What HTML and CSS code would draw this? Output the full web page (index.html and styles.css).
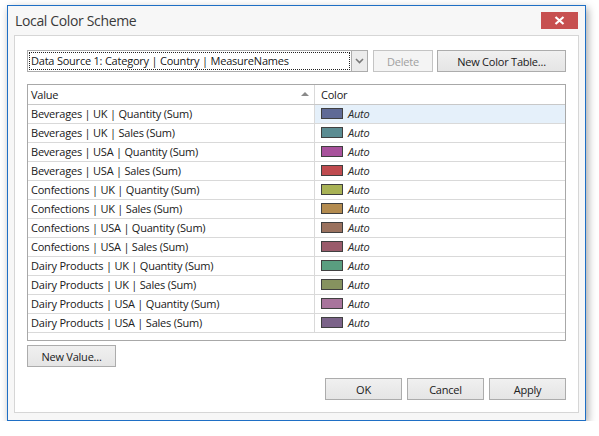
FILE: index.html
```html
<!DOCTYPE html>
<html lang="en">
<head>
    <meta charset="UTF-8">
    <title>Local Color Scheme</title>
    <link rel="stylesheet" href="styles.css">
</head>
<body>
    <div class="window">
        <div class="titlebar">
            <span class="title">Local Color Scheme</span>
            <div class="close-btn">
                <svg width="11" height="9" viewBox="0 0 11 9"><path d="M1.5 1 L9.5 8 M9.5 1 L1.5 8" stroke="#fff" stroke-width="2.2"/></svg>
            </div>
        </div>
        <div class="panel">
            <div class="toolbar">
                <div class="combo">
                    <div class="combo-text">Data Source 1: Category | Country | MeasureNames</div>
                    <div class="combo-arrow">
                        <svg width="9" height="6" viewBox="0 0 9 6"><path d="M1 1 L4.5 4.5 L8 1" stroke="#7a7a7a" stroke-width="1.6" fill="none"/></svg>
                    </div>
                </div>
                <button class="btn btn-delete" disabled>Delete</button>
                <button class="btn btn-newtable">New Color Table...</button>
            </div>
            <div class="grid">
                <div class="grid-row grid-header">
                    <div class="cell cell-value">Value <span class="sort-arrow"></span></div>
                    <div class="cell cell-color">Color</div>
                </div>
                <div id="rows"></div>
            </div>
            <div class="row-under">
                <button class="btn btn-newvalue">New Value...</button>
            </div>
            <div class="footer">
                <button class="btn btn-footer">OK</button>
                <button class="btn btn-footer">Cancel</button>
                <button class="btn btn-footer">Apply</button>
            </div>
        </div>
    </div>
    <script>
        let items = [
            ["Beverages | UK | Quantity (Sum)", "#5f6a96"],
            ["Beverages | UK | Sales (Sum)", "#5b8c92"],
            ["Beverages | USA | Quantity (Sum)", "#a8529c"],
            ["Beverages | USA | Sales (Sum)", "#bf4b4f"],
            ["Confections | UK | Quantity (Sum)", "#a8b255"],
            ["Confections | UK | Sales (Sum)", "#b38b4f"],
            ["Confections | USA | Quantity (Sum)", "#9a715e"],
            ["Confections | USA | Sales (Sum)", "#9a5b6b"],
            ["Dairy Products | UK | Quantity (Sum)", "#5a9e80"],
            ["Dairy Products | UK | Sales (Sum)", "#86925f"],
            ["Dairy Products | USA | Quantity (Sum)", "#a8749c"],
            ["Dairy Products | USA | Sales (Sum)", "#7b6389"]
        ];
        let rows = document.getElementById("rows");
        items.forEach((item, i) => {
            let row = document.createElement("div");
            row.className = "grid-row";
            row.innerHTML = `<div class="cell cell-value">${item[0]}</div>` +
                `<div class="cell cell-color${i === 0 ? " focused" : ""}"><span class="swatch" style="background:${item[1]}"></span><i>Auto</i></div>`;
            rows.appendChild(row);
        });
    </script>
</body>
</html>
```

FILE: styles.css
```css
body {
    margin: 0;
    background: #ffffff;
    font-family: "Open Sans", "Noto Sans", sans-serif;
    font-size: 11px;
    letter-spacing: -0.22px;
    color: #202020;
}
.window {
    margin: 5px 0 0 7px;
    width: 577px;
    height: 414px;
    border: 1px solid #1f6fc5;
    background: #f7f7f7;
    box-shadow: 2px 3px 8px rgba(0, 0, 0, 0.35);
    display: flex;
    flex-direction: column;
}
.titlebar {
    height: 29px;
    display: flex;
    justify-content: space-between;
    align-items: flex-start;
}
.title {
    font-size: 14px;
    color: #3a3a3a;
    margin: 5px 0 0 7px;
    letter-spacing: -0.35px;
}
.close-btn {
    width: 37px;
    height: 17px;
    margin: 6px 7px 0 0;
    background: #c75050;
    display: flex;
    align-items: center;
    justify-content: center;
}
.panel {
    flex: 1;
    margin: 0 6px 7px 6px;
    background: #ffffff;
    border: 1px solid #d6d6d6;
    padding: 14px 12px 12px 12px;
    display: flex;
    flex-direction: column;
}
.toolbar {
    display: flex;
    height: 22px;
}
.combo {
    width: 341px;
    display: flex;
    border: 1px solid #acacac;
    box-sizing: border-box;
}
.combo-text {
    flex: 1;
    border: 1px dotted #202020;
    margin: 1px;
    padding-left: 1px;
    line-height: 16px;
    white-space: nowrap;
    overflow: hidden;
}
.combo-arrow {
    width: 15px;
    border-left: 1px solid #acacac;
    background: #ececec;
    display: flex;
    align-items: center;
    justify-content: center;
}
.btn {
    font-family: inherit;
    font-size: 11px;
    letter-spacing: -0.22px;
    color: #202020;
    border: 1px solid #acacac;
    background: linear-gradient(#f0f0f0, #e5e5e5);
    padding: 0;
    height: 22px;
    box-sizing: border-box;
}
.btn-delete {
    width: 60px;
    margin-left: 5px;
    color: #a0a0a0;
    border-color: #c4c4c4;
    background: #f4f4f4;
}
.btn-newtable {
    width: 129px;
    margin-left: 4px;
}
.grid {
    margin-top: 12px;
    height: 257px;
    border: 1px solid #a8a8a8;
    box-sizing: border-box;
}
.grid-row {
    display: flex;
    height: 19px;
    border-bottom: 1px solid #d9d9d9;
    box-sizing: border-box;
}
.grid-header {
    height: 20px;
    border-bottom-color: #c8c8c8;
}
.cell {
    display: flex;
    align-items: center;
    white-space: nowrap;
    padding-bottom: 1px;
}
.cell-value {
    width: 283px;
    padding-left: 3px;
    border-right: 1px solid #d9d9d9;
    position: relative;
}
.cell-color {
    flex: 1;
    padding-left: 6px;
}
.cell-color i {
    color: #2a2a2a;
    margin-left: 5px;
}
.focused {
    background: #e5f0fa;
}
.swatch {
    width: 20px;
    height: 9px;
    border: 1px solid #404040;
}
.sort-arrow {
    position: absolute;
    right: 5px;
    top: 7px;
    width: 0;
    height: 0;
    border-left: 4px solid transparent;
    border-right: 4px solid transparent;
    border-bottom: 4px solid #8a8a8a;
}
.row-under {
    margin-top: 4px;
}
.btn-newvalue {
    width: 89px;
}
.footer {
    margin-top: auto;
    display: flex;
    justify-content: flex-end;
    gap: 5px;
}
.btn-footer {
    width: 77px;
}
```
